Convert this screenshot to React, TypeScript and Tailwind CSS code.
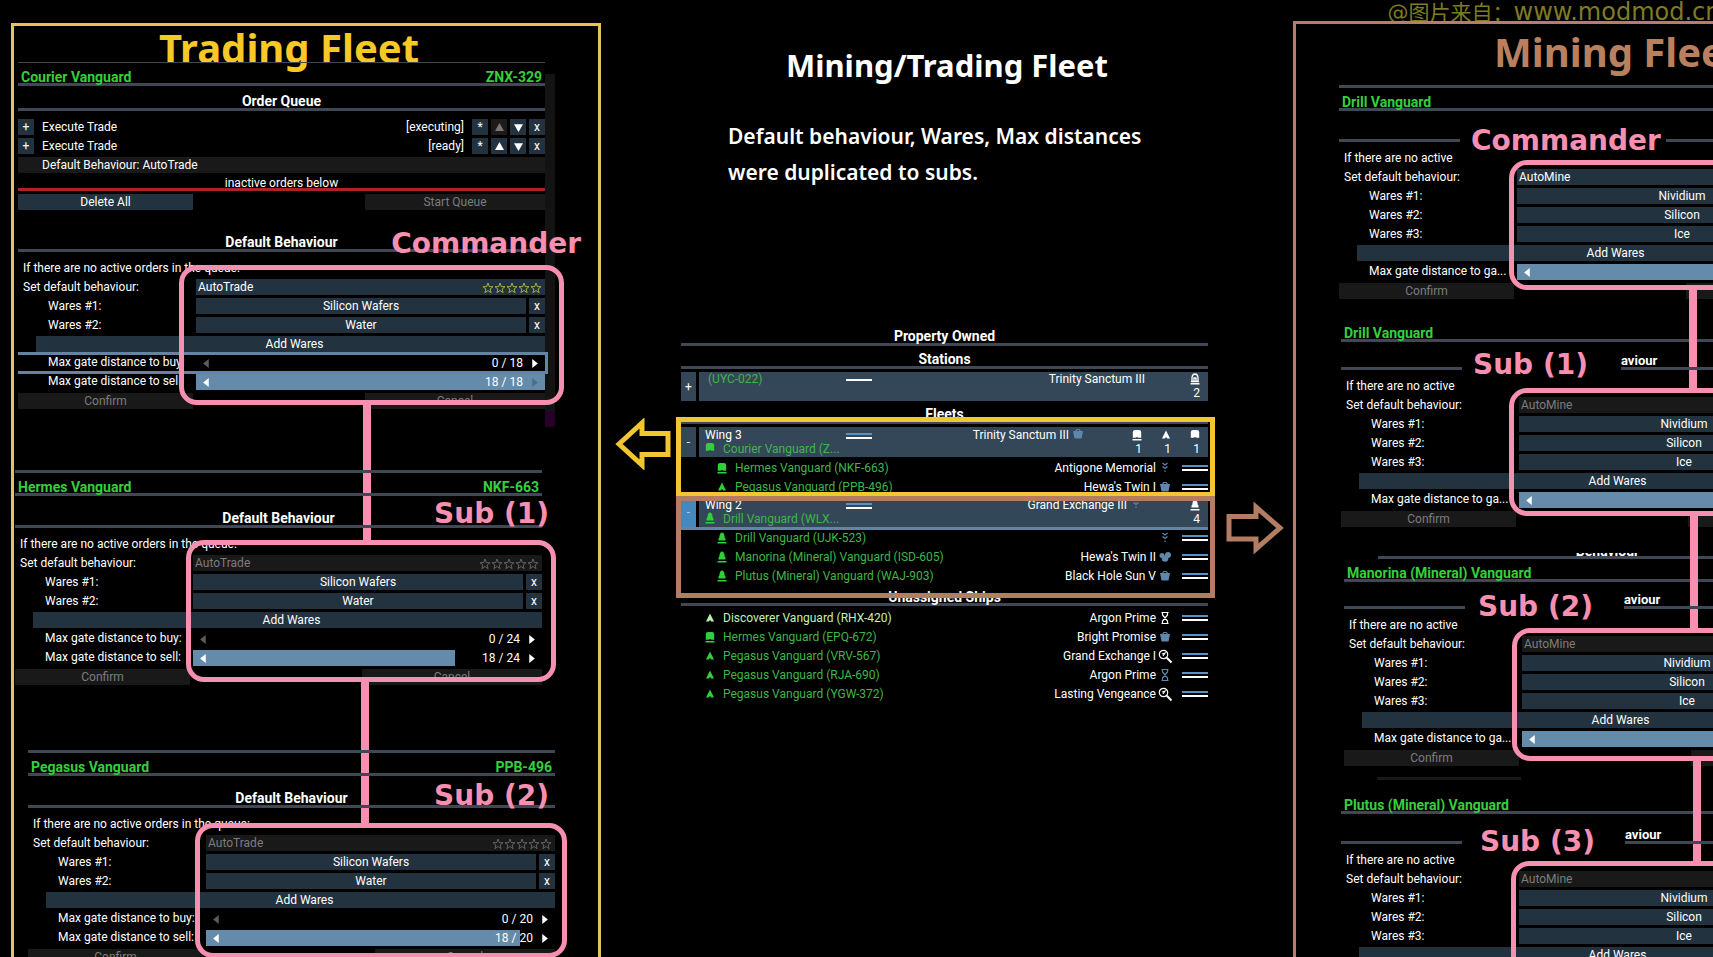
import React, { useId } from 'react';
import clsx from 'clsx';

type ShipIcon = 'bell' | 'tri' | 'flag' | 'station';
type OrderIcon = 'chevrons' | 'basket' | 'hourglass' | 'search' | 'cluster';

interface Gate {
  label: string;
  value: number;
  max: number;
  focused?: boolean;
}

interface BehaviourProps {
  mode: string;
  wares: string[];
  gates: Gate[];
  intro: string;
  locked?: boolean;
  showValues?: boolean;
  boxClass: string;
  linkClass?: string;
}

const ROW = 'h-4 text-[12px] leading-4';
const BUTTON = 'block h-4 bg-[#22333f] text-center text-[12px] leading-4 text-white';
const BUTTON_OFF = 'block h-4 bg-[#191919] text-center text-[12px] leading-4 text-[#7d7d7d]';

function Arrow({ dir, className }: { dir: 'up' | 'down' | 'left' | 'right'; className?: string }) {
  const points = {
    up: '4,0 8,7 0,7',
    down: '0,1 8,1 4,8',
    left: '6,0 6,8 1,4',
    right: '2,0 7,4 2,8',
  };
  return (
    <svg viewBox="0 0 8 8" className={clsx('size-[9px]', className)} fill="currentColor" aria-hidden="true">
      <polygon points={points[dir]} />
    </svg>
  );
}

function Stars({ dim }: { dim?: boolean }) {
  return (
    <span className={clsx('pointer-events-none absolute top-[3px] right-[3px] flex', dim ? 'text-[#6a6a6a]' : 'text-[#b3b845]')}>
      {[0, 1, 2, 3, 4].map(i => (
        <svg key={i} viewBox="0 0 12 12" className="size-3" fill="none" stroke="currentColor" aria-hidden="true">
          <polygon points="6,1 7.3,4.6 11,4.7 8.1,7 9.1,10.7 6,8.5 2.9,10.7 3.9,7 1,4.7 4.7,4.6" strokeWidth="0.9" />
        </svg>
      ))}
    </span>
  );
}

function ShipTitle({ name, code, topRule }: { name: string; code?: string; topRule?: string }) {
  return (
    <div className={clsx('border-b-3 border-[#3f4854]', topRule)}>
      <div className="flex h-5 items-end justify-between px-[3px] text-[14px] leading-3 font-bold text-[#35cf3c]">
        <h2>{name}</h2>
        {code && <span>{code}</span>}
      </div>
    </div>
  );
}

function Heading({ children, className }: { children?: React.ReactNode; className: string }) {
  return (
    <h3 className={clsx('flex items-end justify-center border-b-3 border-[#3f4854] text-[14px] leading-[14px] font-bold text-white', className)}>
      {children}
    </h3>
  );
}

// heading whose rule is broken in the middle by the role name
function SplitHeading({ className, gapClass, children }: { className: string; gapClass: string; children?: React.ReactNode }) {
  return (
    <div className={clsx('flex', className)}>
      <div className="w-[121px] border-b-3 border-[#3f4854]" />
      <div className={gapClass} />
      <h3 className="flex flex-1 items-end border-b-3 border-[#3f4854] text-[13px] leading-3 font-bold">{children}</h3>
    </div>
  );
}

function GateSlider({ gate, showValues }: { gate: Gate; showValues?: boolean }) {
  const id = useId();
  const atEnd = gate.value === gate.max;
  return (
    <div className={clsx('flex', ROW, gate.focused && '-my-[3px] -mr-[3px] box-content border-y-3 border-r-3 border-[#6384a5]')}>
      <label htmlFor={id} className="w-[178px] shrink-0 pl-[30px] leading-[14px] whitespace-nowrap">{gate.label}</label>
      <div className="relative flex-1">
        <div className="absolute inset-y-0 left-0 bg-[#648baa]" style={{ width: `${(gate.value / gate.max) * 100}%` }} />
        <div className="relative flex h-full items-center px-1.5">
          <Arrow dir="left" className={gate.value === 0 ? 'text-[#5c5c5c]' : 'text-white'} />
          {showValues && <span className="mr-[7px] ml-auto">{gate.value} / {gate.max}</span>}
          <Arrow dir="right" className={clsx(!showValues && 'ml-auto', atEnd ? 'text-[#4d6c86]' : 'text-white')} />
        </div>
        <input id={id} type="range" min={0} max={gate.max} defaultValue={gate.value} className="absolute inset-0 w-full cursor-pointer opacity-0" />
      </div>
    </div>
  );
}

function Behaviour({ mode, wares, gates, intro, locked, showValues, boxClass, linkClass }: BehaviourProps) {
  const id = useId();
  return (
    <>
      <p className={clsx('mt-2 mb-[3px] pl-[5px] whitespace-nowrap', ROW)}>{intro}</p>
      <div className="relative flex flex-col gap-[3px]">
        <div className={clsx('flex', ROW)}>
          <label htmlFor={id} className="w-[178px] shrink-0 pl-[5px]">Set default behaviour:</label>
          <div className="relative flex-1">
            <select
              id={id}
              disabled={locked}
              className={clsx('h-4 w-full appearance-none pl-0.5 text-[12px] leading-4 opacity-100', locked ? 'bg-[#191919] text-[#7d7d7d]' : 'bg-[#22333f] text-white')}
            >
              <option>{mode}</option>
            </select>
            <Stars dim={locked} />
          </div>
        </div>
        {wares.map((ware, i) => (
          <div key={ware} className={clsx('flex', ROW)}>
            <label htmlFor={id + ware} className="w-[178px] shrink-0 pl-[30px]">Wares #{i + 1}:</label>
            <button id={id + ware} className={clsx(BUTTON, 'flex-1')}>{ware}</button>
            <button className={clsx(BUTTON, 'ml-[3px] w-4')}>x</button>
          </div>
        ))}
        <button className={clsx(BUTTON, 'ml-[18px] pl-2')}>Add Wares</button>
        {gates.map(gate => <GateSlider key={gate.label} gate={gate} showValues={showValues} />)}
        <div className="flex justify-between">
          <button disabled className={clsx(BUTTON_OFF, 'w-[175px]')}>Confirm</button>
          <button disabled className={clsx(BUTTON_OFF, 'w-[180px]')}>Cancel</button>
        </div>
        <div className={clsx('pointer-events-none absolute rounded-[18px] border-5 border-[#f78fb1]', boxClass)} />
        {linkClass && <div className={clsx('absolute w-2 bg-[#f78fb1]', linkClass)} />}
      </div>
    </>
  );
}

function RoleTag({ children, className }: { children: React.ReactNode; className: string }) {
  return (
    <strong className={clsx("absolute z-10 font-['DejaVu_Sans'] text-[28px] leading-10 font-bold whitespace-nowrap text-[#f78fb1]", className)}>
      {children}
    </strong>
  );
}

function Order({ state, first }: { state: string; first?: boolean }) {
  return (
    <div className={clsx('flex gap-[3px]', ROW)}>
      <button className={clsx(BUTTON, 'w-4')}>+</button>
      <span className="ml-[5px]">Execute Trade</span>
      <span className="mr-[5px] ml-auto">{state}</span>
      <button className={clsx(BUTTON, 'w-4')}>*</button>
      <button aria-label="Move up" className={clsx('grid size-4 place-items-center', first ? 'bg-[#1d1a1a] text-[#777]' : 'bg-[#22333f] text-white')}>
        <Arrow dir="up" />
      </button>
      <button aria-label="Move down" className="grid size-4 place-items-center bg-[#22333f] text-white">
        <Arrow dir="down" />
      </button>
      <button className={clsx(BUTTON, 'w-4')}>x</button>
    </div>
  );
}

const INTRO = 'If there are no active orders in the queue:';

const tradeGates = (max: number, focused = false): Gate[] => [
  { label: 'Max gate distance to buy:', value: 0, max, focused },
  { label: 'Max gate distance to sell:', value: 18, max },
];

function TradingFleet() {
  const wares = ['Silicon Wafers', 'Water'];
  return (
    <section className="mt-0.5 border-3 border-b-0 border-[#e6c45c]">
      <h1 className="h-9 pt-1 pl-[145px] font-['Noto_Sans'] text-[40px] leading-9 font-bold whitespace-nowrap text-[#f6c927]">Trading Fleet</h1>

      <article className="relative mr-[53px] ml-1">
        <div className="absolute top-3 -right-[10px] h-[353px] w-[10px] bg-[#131313]">
          <div className="absolute bottom-0 h-4 w-full bg-[#260026]" />
        </div>
        <ShipTitle name="Courier Vanguard" code="ZNX-329" topRule="border-t" />
        <Heading className="h-[25px]">Order Queue</Heading>
        <div className="mt-2 flex flex-col gap-[3px]">
          <Order state="[executing]" first />
          <Order state="[ready]" />
          <p className={clsx('bg-[#191919] pl-6', ROW)}>Default Behaviour: AutoTrade</p>
          <p className="border-b-3 border-[#ab2427] pt-0.5 text-center text-[12px] leading-[10px]">inactive orders below</p>
          <div className="flex justify-between">
            <button className={clsx(BUTTON, 'w-[175px]')}>Delete All</button>
            <button disabled className={clsx(BUTTON_OFF, 'w-[180px]')}>Start Queue</button>
          </div>
        </div>
        <div className="relative mt-[11px]">
          <Heading className="h-[31px]">Default Behaviour</Heading>
          <RoleTag className="top-[3px] -right-9">Commander</RoleTag>
        </div>
        <Behaviour
          mode="AutoTrade"
          wares={wares}
          intro={INTRO}
          gates={tradeGates(18, true)}
          showValues
          boxClass="-top-[14px] bottom-1 left-[161px] -right-[19px]"
          linkClass="top-[125px] left-[345px] h-[136px]"
        />
      </article>

      <article className="relative mt-[61px] mr-[56px] ml-px">
        <ShipTitle name="Hermes Vanguard" code="NKF-663" topRule="border-t-3" />
        <div className="relative">
          <Heading className="h-8">Default Behaviour</Heading>
          <RoleTag className="-top-0.5 -right-[7px]">Sub (1)</RoleTag>
        </div>
        <Behaviour
          mode="AutoTrade"
          wares={wares}
          intro={INTRO}
          gates={tradeGates(24)}
          locked
          showValues
          boxClass="-top-[15px] bottom-[3px] left-[171px] -right-[14px]"
          linkClass="top-[127px] left-[346px] h-[142px]"
        />
      </article>

      <article className="relative mt-[65px] mr-[43px] ml-[14px]">
        <ShipTitle name="Pegasus Vanguard" code="PPB-496" topRule="border-t-3" />
        <div className="relative">
          <Heading className="h-8">Default Behaviour</Heading>
          <RoleTag className="top-0 right-1.5">Sub (2)</RoleTag>
        </div>
        <Behaviour
          mode="AutoTrade"
          wares={wares}
          intro={INTRO}
          gates={tradeGates(20)}
          locked
          showValues
          boxClass="-top-3 bottom-[7px] left-[167px] -right-3"
        />
      </article>
    </section>
  );
}

function MiningFleet() {
  const shared = {
    mode: 'AutoMine',
    wares: ['Nividium', 'Silicon', 'Ice'],
    intro: 'If there are no active',
    gates: [{ label: 'Max gate distance to ga...', value: 18, max: 18 }],
  };
  return (
    <section className="overflow-hidden border-t-3 border-l-3 border-[#b0806a]">
      <h1 className="h-[61px] pt-[10px] pl-[198px] font-['Noto_Sans'] text-[40px] leading-9 font-bold whitespace-nowrap text-[#b98060]">Mining Fleet</h1>

      <article className="ml-[43px] w-[527px]">
        <ShipTitle name="Drill Vanguard" topRule="border-t-3" />
        <div className="relative">
          <SplitHeading className="h-[31px]" gapClass="w-[206px]" />
          <RoleTag className="top-[10px] left-[132px]">Commander</RoleTag>
        </div>
        <Behaviour {...shared} boxClass="-top-[9px] bottom-[9px] left-[170px] -right-4" linkClass="top-[121px] left-[350px] h-[99px]" />
      </article>

      <article className="mt-5 ml-[45px] w-[527px]">
        <ShipTitle name="Drill Vanguard" />
        <div className="relative">
          <SplitHeading className="h-7" gapClass="w-[159px]">aviour</SplitHeading>
          <RoleTag className="top-[3px] left-[132px]">Sub (1)</RoleTag>
        </div>
        <Behaviour {...shared} locked boxClass="-top-[9px] bottom-[11px] left-[168px] -right-4" linkClass="top-[119px] left-[349px] h-[113px]" />
      </article>

      <article className="mt-[26px] ml-12 w-[527px]">
        <div className="flex h-[3px] items-end justify-center overflow-hidden text-[14px] leading-[10px] font-bold">Behaviour</div>
        <div className="ml-[34px] h-[3px] bg-[#3f4854]" />
        <ShipTitle name="Manorina (Mineral) Vanguard" />
        <div className="relative">
          <SplitHeading className="h-[27px]" gapClass="w-[159px]">aviour</SplitHeading>
          <RoleTag className="top-[5px] left-[134px]">Sub (2)</RoleTag>
        </div>
        <Behaviour {...shared} locked boxClass="-top-2 bottom-[5px] left-[168px] -right-4" linkClass="top-[125px] left-[349px] h-[101px]" />
      </article>

      <article className="mt-[11px] ml-[45px] w-[527px]">
        <div className="mb-[11px] ml-9 h-[3px] w-36 bg-[#191919]" />
        <ShipTitle name="Plutus (Mineral) Vanguard" />
        <div className="relative">
          <SplitHeading className="h-[30px]" gapClass="w-[163px]">aviour</SplitHeading>
          <RoleTag className="top-2 left-[139px]">Sub (3)</RoleTag>
        </div>
        <Behaviour {...shared} locked boxClass="-top-[10px] bottom-[9px] left-[170px] -right-4" />
      </article>
    </section>
  );
}

function Ship({ icon, base, className }: { icon: ShipIcon; base?: boolean; className?: string }) {
  return (
    <svg viewBox="0 0 10 12" className={clsx('h-3 w-[10px] shrink-0', className)} fill="currentColor" aria-hidden="true">
      {icon === 'bell' && <path d="M1.5 8.500 V6.500 Q2.500 6 2.500 4 Q3 0.500 5 0.500 Q7 0.500 7.500 4 Q7.500 6 8.500 6.500 V8.500 Z" />}
      {icon === 'tri' && <path d="M5 1.500 L9 9.500 H6.200 L5 8 L3.800 9.500 H1 Z" />}
      {icon === 'flag' && <path d="M0.800 3 Q1 1 3 1 H7 Q9 1 9.200 3 V8.800 H6.500 L5 8 L3.500 8.800 H0.800 Z" />}
      {icon === 'station' && (
        <path d="M2 8 V4.500 Q2.500 1 5 1 Q7.500 1 8 4.500 V8 M4 8 V5 H6 V8 M1 8.500 H9" fill="none" stroke="currentColor" strokeWidth="1.300" />
      )}
      {base && <rect x="0.500" y="10" width="9" height="1.500" />}
    </svg>
  );
}

function OrderMark({ icon, className }: { icon: OrderIcon; className?: string }) {
  return (
    <svg viewBox="0 0 12 12" className={clsx('size-3 shrink-0 overflow-visible', className)} fill="none" stroke="currentColor" strokeWidth="1.200" aria-hidden="true">
      {icon === 'chevrons' && <path d="M3.500 1 L6 3 L8.500 1 M3.500 4.500 L6 6.500 L8.500 4.500 M6 8.500 V10" />}
      {icon === 'basket' && (
        <>
          <path d="M1 3 H11 L9.500 10.500 H2.500 Z" fill="currentColor" stroke="none" />
          <path d="M3.500 3.200 L4.800 1.500 H7.200 L8.500 3.200" />
        </>
      )}
      {icon === 'hourglass' && <path d="M2.500 0.500 H9.500 M2.500 11.500 H9.500 M3.500 1 V3 L8.500 9 V11 M8.500 1 V3 L3.500 9 V11" />}
      {icon === 'search' && (
        <>
          <circle cx="4.500" cy="4.500" r="4.200" />
          <path d="M3 4 L6 3 L4 6" />
          <path d="M7.800 7.800 L12.500 12.500" strokeWidth="2" />
        </>
      )}
      {icon === 'cluster' && (
        <g fill="currentColor" stroke="none">
          <circle cx="3" cy="4.500" r="2.500" />
          <circle cx="9" cy="4" r="3" />
          <circle cx="6" cy="7.500" r="3.300" />
        </g>
      )}
    </svg>
  );
}

function Bars({ single }: { single?: boolean }) {
  return (
    <span className="flex w-[26px] shrink-0 flex-col gap-0.5">
      {!single && <span className="h-0.5 bg-[#5592c8]" />}
      <span className="h-0.5 bg-white" />
    </span>
  );
}

interface ShipRow {
  icon: ShipIcon;
  base?: boolean;
  name: string;
  place?: string;
  order: OrderIcon;
  white?: boolean;
  idle?: boolean;
}

function ShipList({ rows, nested }: { rows: ShipRow[]; nested?: boolean }) {
  return (
    <ul>
      {rows.map(row => (
        <li key={row.name} className={clsx('flex h-[19px] items-center text-[12px] leading-4', nested ? 'pl-9' : 'pl-6')}>
          <Ship icon={row.icon} base={row.base} className={row.idle ? 'text-[#b9efb0]' : 'text-[#2fd038]'} />
          <span className={clsx('ml-2', row.idle ? 'text-[#c3f0ba]' : 'text-[#3fb649]')}>{row.name}</span>
          <span className="mr-[3px] ml-auto">{row.place}</span>
          <OrderMark icon={row.order} className={clsx('mr-[11px]', row.white ? 'text-white' : 'text-[#5f86ab]')} />
          <Bars />
        </li>
      ))}
    </ul>
  );
}

interface GroupProps {
  title: string;
  leader?: string;
  leaderIcon?: ShipIcon;
  place: string;
  order?: OrderIcon;
  counts: { icon: ShipIcon; base?: boolean; n: number }[];
  open?: boolean;
  active?: boolean;
}

function GroupRow({ title, leader, leaderIcon = 'flag', place, order, counts, open, active }: GroupProps) {
  const station = !leader;
  return (
    <div className={clsx('flex gap-[3px] text-[12px] leading-[14px]', active && 'border-b-3 border-[#6384a5]')}>
      <button className={clsx('w-[15px] shrink-0', active ? 'bg-[#4688bd] text-[#a9d0ee]' : 'bg-[#334758] text-white')}>{open ? '-' : '+'}</button>
      <div className={clsx('flex flex-1 bg-[#334758]', station ? 'h-[29px]' : 'h-[30px] pt-px')}>
        <div className="w-[147px] pl-1.5 whitespace-nowrap">
          <p className={clsx(station && 'pl-[3px] text-[#3fb649]')}>{title}</p>
          {leader && (
            <p className="flex gap-2 text-[#3fb649]">
              <Ship icon={leaderIcon} base={leaderIcon === 'bell'} className="text-[#2fd038]" />
              {leader}
            </p>
          )}
        </div>
        <div className="flex h-4 items-center"><Bars single={station} /></div>
        <p className={clsx('ml-auto flex items-start gap-[3px] self-start', station ? 'mr-[26px]' : 'mr-[29px]')}>
          {place}
          {order && <OrderMark icon={order} className="text-[#5f86ab]" />}
        </p>
        <div className="flex pr-2">
          {counts.map((c, i) => (
            <span key={i} className="flex w-[29px] flex-col items-end">
              <span className="flex h-[14px] items-center"><Ship icon={c.icon} base={c.base} /></span>
              {c.n}
            </span>
          ))}
        </div>
      </div>
    </div>
  );
}

const wing3: ShipRow[] = [
  { icon: 'flag', base: true, name: 'Hermes Vanguard (NKF-663)', place: 'Antigone Memorial', order: 'chevrons' },
  { icon: 'tri', name: 'Pegasus Vanguard (PPB-496)', place: "Hewa's Twin I", order: 'basket' },
];

const wing2: ShipRow[] = [
  { icon: 'bell', base: true, name: 'Drill Vanguard (UJK-523)', order: 'chevrons' },
  { icon: 'bell', base: true, name: 'Manorina (Mineral) Vanguard (ISD-605)', place: "Hewa's Twin II", order: 'cluster' },
  { icon: 'bell', base: true, name: 'Plutus (Mineral) Vanguard (WAJ-903)', place: 'Black Hole Sun V', order: 'basket' },
];

const unassigned: ShipRow[] = [
  { icon: 'tri', name: 'Discoverer Vanguard (RHX-420)', place: 'Argon Prime', order: 'hourglass', white: true, idle: true },
  { icon: 'flag', base: true, name: 'Hermes Vanguard (EPQ-672)', place: 'Bright Promise', order: 'basket' },
  { icon: 'tri', name: 'Pegasus Vanguard (VRV-567)', place: 'Grand Exchange I', order: 'search', white: true },
  { icon: 'tri', name: 'Pegasus Vanguard (RJA-690)', place: 'Argon Prime', order: 'hourglass' },
  { icon: 'tri', name: 'Pegasus Vanguard (YGW-372)', place: 'Lasting Vengeance', order: 'search', white: true },
];

function PropertyOwned() {
  return (
    <section className="mt-[133px] mr-[85px] ml-20">
      <Heading className="h-[23px]">Property Owned</Heading>
      <Heading className="mb-[3px] h-[23px]">Stations</Heading>
      <GroupRow title="(UYC-022)" place="Trinity Sanctum III" counts={[{ icon: 'station', base: true, n: 2 }]} />
      <Heading className="mb-[3px] h-[23px]">Fleets</Heading>

      <div className="relative pb-px">
        <GroupRow
          title="Wing 3"
          leader="Courier Vanguard (Z..."
          place="Trinity Sanctum III"
          order="basket"
          counts={[{ icon: 'flag', base: true, n: 1 }, { icon: 'tri', n: 1 }, { icon: 'flag', n: 1 }]}
          open
        />
        <div className="pt-px"><ShipList rows={wing3} nested /></div>
        <div className="pointer-events-none absolute -top-[10px] -right-[7px] bottom-0 -left-[5px] z-10 border-5 border-[#f2c62f]" />
        <svg viewBox="0 0 56 52" className="absolute -top-[9px] -left-[66px] h-[52px] w-14" fill="none" stroke="#f2c62f" strokeWidth="5" aria-hidden="true">
          <path d="M4 26 L27 5 V15.500 H53 V36.500 H27 V47 Z" />
        </svg>
      </div>

      <div className="relative">
        <GroupRow
          title="Wing 2"
          leader="Drill Vanguard (WLX..."
          leaderIcon="bell"
          place="Grand Exchange III"
          order="chevrons"
          counts={[{ icon: 'bell', base: true, n: 4 }]}
          open
          active
        />
        <div className="-mt-0.5"><ShipList rows={wing2} nested /></div>
        <div className="pointer-events-none absolute -top-px -right-[7px] -bottom-[13px] -left-[5px] z-10 border-5 border-[#b27d62]" />
        <svg viewBox="0 0 58 52" className="absolute top-[5px] -right-[76px] h-[52px] w-[58px]" fill="none" stroke="#b27d62" strokeWidth="5" aria-hidden="true">
          <path d="M54 26 L30 5 V14.500 H3 V37 H30 V47 Z" />
        </svg>
      </div>

      <h3 className="mb-0.5 border-b-3 border-[#3f4854] pt-[7px] text-center text-[14px] leading-[11px] font-bold">Unassigned Ships</h3>
      <ShipList rows={unassigned} />
    </section>
  );
}

export default function App() {
  return (
    <div className="flex h-screen flex-col overflow-hidden bg-black font-['Roboto',sans-serif] text-white">
      <header className="h-[21px] shrink-0 pl-[81%] font-['DejaVu_Sans','Noto_Sans_CJK_SC',sans-serif] text-[21px] leading-6 whitespace-nowrap text-[#7f7b22]">
        @图片来自：<span className="text-[24px]">www.modmod.cn</span>
      </header>
      <main className="grid min-h-0 flex-1 grid-cols-[590fr_692fr_420fr] pl-[11px]">
        <TradingFleet />
        <div className="font-normal">
          <h1 className="mt-6 text-center font-['Noto_Sans'] text-[31px] leading-10 font-bold">Mining/Trading Fleet</h1>
          <p className="mt-[33px] pl-[127px] font-['Noto_Sans'] text-[21px] leading-9 font-semibold">
            Default behaviour, Wares, Max distances<br />were duplicated to subs.
          </p>
          <PropertyOwned />
        </div>
        <MiningFleet />
      </main>
    </div>
  );
}
